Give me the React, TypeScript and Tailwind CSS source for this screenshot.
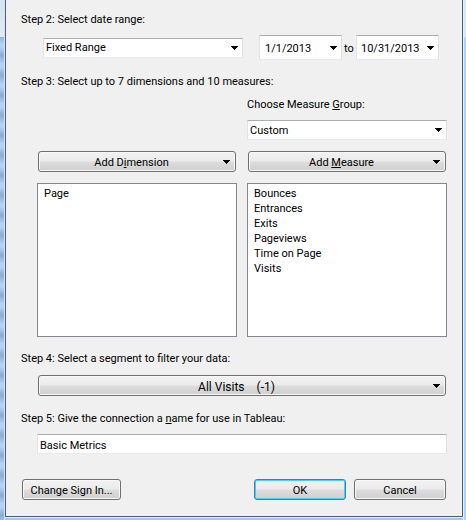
import type { ReactNode } from "react";

function Arrow({ className = "" }: { className?: string }) {
  return (
    <svg
      aria-hidden="true"
      viewBox="0 0 7 4"
      className={`pointer-events-none h-1 w-[7px] shrink-0 fill-black ${className}`}
      shapeRendering="crispEdges"
    >
      <path d="M0 0h7v1H0zM1 1h5v1H1zM2 2h3v1H2zM3 3h1v1H3z" />
    </svg>
  );
}

const fieldBorder =
  "rounded-[1px] border border-t-[#abadb3] border-r-[#dbdfe6] border-b-[#e3e9ef] border-l-[#e2e3ea] bg-white";

function Combo({
  id,
  label,
  value,
  className,
  selectClass = "h-5 pl-0.5",
}: {
  id: string;
  label?: string;
  value: string;
  className: string;
  selectClass?: string;
}) {
  return (
    <div className={`relative ${className}`}>
      <select
        id={id}
        aria-label={label}
        defaultValue={value}
        className={`block w-full appearance-none pr-4 outline-none ${fieldBorder} ${selectClass}`}
      >
        <option>{value}</option>
      </select>
      <Arrow className="absolute top-1/2 right-[5px] -translate-y-1/2" />
    </div>
  );
}

const face =
  "h-[21px] rounded-[3px] border bg-[linear-gradient(to_bottom,#f2f2f2_0%,#ebebeb_48%,#dddddd_52%,#cfcfcf_100%)]";

function MenuButton({ children, className = "" }: { children: ReactNode; className?: string }) {
  return (
    <button
      type="button"
      className={`mx-px flex items-center border-[#707070] px-[5px] shadow-[inset_0_0_0_1px_#f8f8f8] ${face} ${className}`}
    >
      <span className="flex-1 pt-0.5 pr-1 text-center">{children}</span>
      <Arrow />
    </button>
  );
}

function ListBox({ label, items }: { label: string; items: string[] }) {
  return (
    <select
      multiple
      aria-label={label}
      className="h-[154px] w-full appearance-none overflow-hidden border border-[#828790] bg-white py-[3px] outline-none"
    >
      {items.map((item) => (
        <option key={item} className="h-[15px] min-h-0 px-1.5 py-0 leading-[15px]">
          {item}
        </option>
      ))}
    </select>
  );
}

export default function App() {
  return (
    <div className="flex min-h-screen bg-[#b7d6f5] font-[Roboto,sans-serif] text-[11px] leading-4 text-black">
      <div className="flex w-[5px] shrink-0 flex-col border-r border-[#d3e3f3]">
        <div className="h-[37px] bg-linear-to-b from-[#d2e3f3] to-[#e3ebf2]" />
        <div className="flex-1 bg-[repeating-linear-gradient(to_bottom,#90b2d5_0px,#b1d4f8_7px,#b1d4f8_10px,#8badd0_18px,#90b2d5_20px)]" />
      </div>
      <div className="flex min-w-0 flex-1 flex-col">
        <form
          className="flex-1 border-x border-b border-[#4d6078] bg-[#f0f0f0] pt-3 pr-[15px] pb-4 pl-[15px]"
          onSubmit={(e) => e.preventDefault()}
        >
          <label htmlFor="range" className="block">
            Step 2: Select date range:
          </label>
          <div className="mt-[7px] flex items-center pr-2 pl-[22px]">
            <Combo id="range" value="Fixed Range" className="mr-4 min-w-0 flex-1" />
            <Combo
              id="from"
              label="Start date"
              value="1/1/2013"
              className="w-[83px]"
              selectClass="h-[25px] pt-0.5 pl-[5px]"
            />
            <span className="w-[14px] pt-0.5 text-center">to</span>
            <Combo
              id="until"
              label="End date"
              value="10/31/2013"
              className="w-[83px]"
              selectClass="h-[25px] pt-0.5 pl-1"
            />
          </div>

          <h2 className="mt-[14px]">Step 3: Select up to 7 dimensions and 10 measures:</h2>
          <div className="mt-[7px] grid grid-cols-2 gap-x-2.5 pl-4">
            <div className="col-start-2">
              <label htmlFor="group" className="block">
                Choose Measure <u>G</u>roup:
              </label>
              <Combo id="group" value="Custom" className="mt-[7px]" selectClass="h-5 pt-0.5 pl-0.5" />
            </div>
          </div>
          <div className="mt-[11px] grid grid-cols-2 gap-x-2.5 gap-y-[11px] pl-4">
            <MenuButton>
              Add D<u>i</u>mension
            </MenuButton>
            <MenuButton>
              Add <u>M</u>easure
            </MenuButton>
            <ListBox label="Dimensions" items={["Page"]} />
            <ListBox
              label="Measures"
              items={["Bounces", "Entrances", "Exits", "Pageviews", "Time on Page", "Visits"]}
            />
          </div>

          <h2 className="mt-[14px]">Step 4: Select a segment to filter your data:</h2>
          <div className="mt-2 flex flex-col pl-4">
            <MenuButton className="text-xs">
              All Visits<span className="ml-3">(-1)</span>
            </MenuButton>
          </div>

          <label htmlFor="name" className="mt-[15px] block">
            Step 5: Give the connection a <u>n</u>ame for use in Tableau:
          </label>
          <div className="mt-[7px] pl-4">
            <input
              id="name"
              defaultValue="Basic Metrics"
              className={`block h-5 w-full px-0.5 pt-0.5 outline-none ${fieldBorder}`}
            />
          </div>

          <div className="mt-[25px] flex gap-2 px-px">
            <button type="button" className={`mr-auto w-[99px] border-[#707070] pt-0.5 shadow-[inset_0_0_0_1px_#f8f8f8] ${face}`}>
              Change Sign In...
            </button>
            <button type="submit" className={`w-[92px] border-[#3c7fb1] pt-0.5 shadow-[inset_0_0_0_1px_#48d0f5] ${face}`}>
              OK
            </button>
            <button type="button" className={`w-[92px] border-[#707070] pt-0.5 shadow-[inset_0_0_0_1px_#f8f8f8] ${face}`}>
              Cancel
            </button>
          </div>
        </form>
        <div className="h-[3px] border-t border-[#dceaf8] bg-[#a5c7e8]" />
      </div>
      <div className="w-[3px] shrink-0 border-l border-[#e4f0fc] bg-linear-to-b from-[#d9e8f6] from-[37px] to-[#b0d3f8] to-[38px]" />
    </div>
  );
}
